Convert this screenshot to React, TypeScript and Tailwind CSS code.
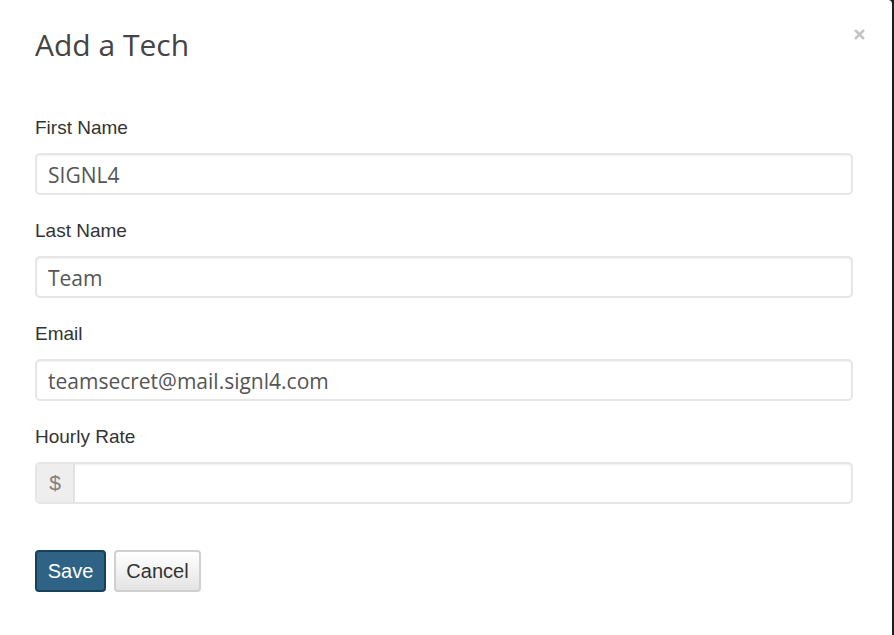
import { X } from "lucide-react";

// Bootstrap-ish modal: "Add a Tech" form
const fields = [
  { label: "First Name", value: "SIGNL4" },
  { label: "Last Name", value: "Team" },
  { label: "Email", value: "teamsecret@mail.signl4.com" },
];

const inputCls =
  "h-[42px] w-full rounded-[5px] border-2 border-[#e6e6e6] bg-white px-[11px] pt-[2px] text-[21px] text-[#555] shadow-[inset_0_1px_2px_rgba(0,0,0,0.06)] outline-none font-['Open_Sans',sans-serif]";

export default function App() {
  return (
    <div className="flex h-[635px] w-[894px] bg-[#1e1e1e]">
      <div className="w-[892px] rounded-tr-[4px] bg-white pl-[35px] pr-[39px]">
        <div className="flex items-start justify-between pt-[28px]">
          <h1 className="text-[30px] leading-[33px] text-[#444] font-['Open_Sans',sans-serif]">Add a Tech</h1>
          <button className="mr-[-14px] mt-[-1px] text-[#c4c4c4]">
            <X className="size-[15px]" strokeWidth={4} />
          </button>
        </div>

        <form className="mt-[54px] font-['Liberation_Sans',Arial,sans-serif]">
          {fields.map((f) => (
            <div key={f.label} className="mb-[23px]">
              <label className="block h-[26px] text-[19px] leading-[26px] text-[#333]">{f.label}</label>
              <input className={`mt-[12px] ${inputCls}`} defaultValue={f.value} />
            </div>
          ))}
          <div>
            <label className="block h-[26px] text-[19px] leading-[26px] text-[#333]">Hourly Rate</label>
            <div className="mt-[12px] flex h-[42px] overflow-hidden rounded-[5px] border-2 border-[#e6e6e6] shadow-[inset_0_1px_2px_rgba(0,0,0,0.06)]">
              <span className="flex w-[38px] items-center justify-center border-r-2 border-[#e2e2e2] bg-[#eeeeee] text-[21px] text-[#808080]">
                $
              </span>
              <input className="flex-1 bg-transparent px-[12px] text-[21px] outline-none" />
            </div>
          </div>

          <div className="mt-[46px] flex gap-[8px]">
            <button
              type="button"
              className="h-[42px] w-[71px] rounded-[4px] border-2 border-[#17415a] bg-[#2e6385] text-[20px] text-white"
            >
              Save
            </button>
            <button
              type="button"
              className="h-[42px] w-[87px] rounded-[4px] border-2 border-[#d0d0d0] bg-gradient-to-b from-white to-[#e4e4e4] text-[20px] text-[#333]"
            >
              Cancel
            </button>
          </div>
        </form>
      </div>
    </div>
  );
}
